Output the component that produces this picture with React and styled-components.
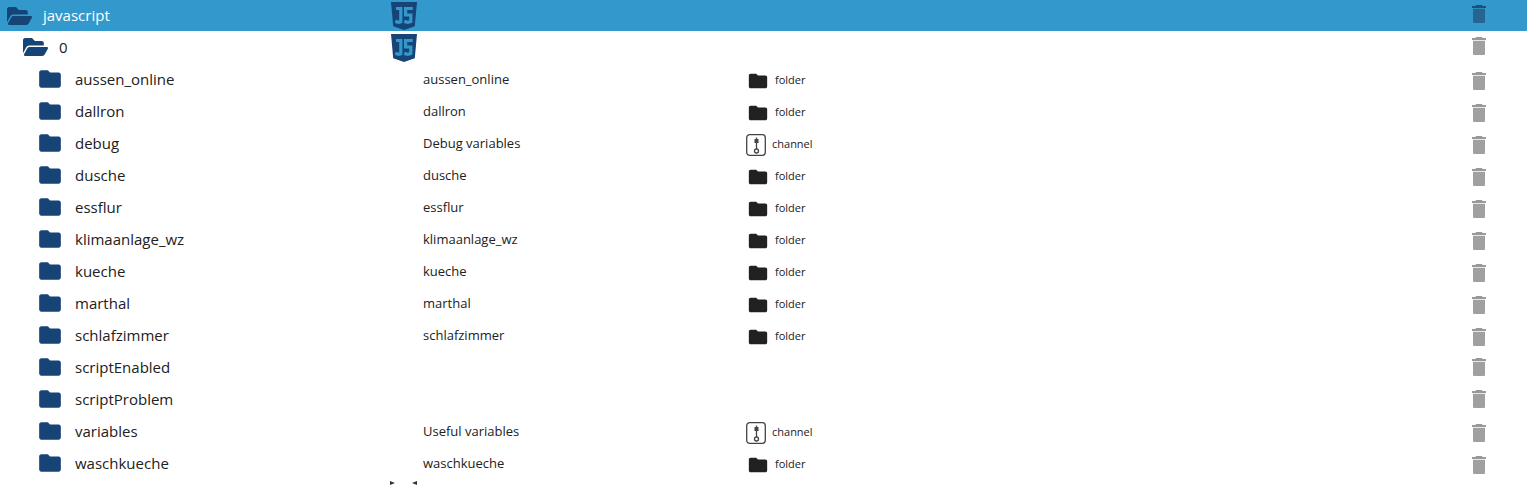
import React from 'react'
import styled, { createGlobalStyle } from 'styled-components'

const GlobalStyle = createGlobalStyle`
  html, body {
    margin: 0;
    padding: 0;
    background: #fff;
    overflow: hidden;
  }
  body {
    font-family: "Open Sans", "Liberation Sans", sans-serif;
    color: #212121;
  }
`

const rows = [
  { name: 'aussen_online', title: 'aussen_online', type: 'folder' },
  { name: 'dallron', title: 'dallron', type: 'folder' },
  { name: 'debug', title: 'Debug variables', type: 'channel' },
  { name: 'dusche', title: 'dusche', type: 'folder' },
  { name: 'essflur', title: 'essflur', type: 'folder' },
  { name: 'klimaanlage_wz', title: 'klimaanlage_wz', type: 'folder' },
  { name: 'kueche', title: 'kueche', type: 'folder' },
  { name: 'marthal', title: 'marthal', type: 'folder' },
  { name: 'schlafzimmer', title: 'schlafzimmer', type: 'folder' },
  { name: 'scriptEnabled' },
  { name: 'scriptProblem' },
  { name: 'variables', title: 'Useful variables', type: 'channel' },
  { name: 'waschkueche', title: 'waschkueche', type: 'folder' },
]

function FolderIcon({ size = 26, color = '#164477' }) {
  return (
    <svg width={size} height={size} viewBox="0 0 24 24" fill={color}>
      <path d="M10 4H4c-1.100 0-2 .9-2 2v12c0 1.100.9 2 2 2h16c1.100 0 2-.9 2-2V8c0-1.100-.9-2-2-2h-8l-2-2z" />
    </svg>
  )
}

function FolderOpenIcon() {
  return (
    <svg width="25" height="24" viewBox="0 0 576 512" fill="#164477" preserveAspectRatio="none">
      <path d="M572.700 292.100l-72.400 124.100A64 64 0 0 1 445 448H45c-18.500 0-30-20-20.700-36.100l72.400-124.100A64 64 0 0 1 152 256h400c18.500 0 30 20 20.700 36.100zM152 224h328v-48c0-26.500-21.500-48-48-48H272l-64-64H48C21.500 64 0 85.500 0 112v278l69.100-118.400C86.200 242.300 117.900 224 152 224z" />
    </svg>
  )
}

function JsIcon() {
  return (
    <svg width="26" height="28" viewBox="0 0 26 28">
      <path d="M0 0h26l-2.200 24.200L13 28 2.200 24.200z" fill="#164477" />
      <g fill="none" stroke="#3399cc" strokeWidth="3.200">
        <path d="M5 6.500H9.800V19.700L7.500 20.400L4.300 19.400" />
        <path d="M21.800 6.500H14.600V13H19.800V19.500L16.800 20.400L13.200 19.400" />
      </g>
    </svg>
  )
}

function TrashIcon({ lid = '#999', body = '#a0a0a0' }) {
  return (
    <svg width="14" height="18" viewBox="0 0 14 18">
      <path d="M1 3.700h12v13c0 .7-.6 1.300-1.300 1.300H2.300c-.7 0-1.300-.6-1.300-1.300z" fill={body} />
      <path d="M4 0h6l.5 1H14v2H0V1h3.500z" fill={lid} />
    </svg>
  )
}

function ChannelIcon() {
  return (
    <svg width="20" height="22" viewBox="0 0 20 22" fill="none" stroke="#444" strokeWidth="1.300">
      <rect x="0.700" y="0.700" width="18.600" height="20.600" rx="3" />
      <path d="M10.500 3.500v11.500" />
      <rect x="8.500" y="5" width="4" height="4" fill="#444" stroke="none" />
      <circle cx="10.500" cy="17" r="2" />
    </svg>
  )
}

function ClippedMarks() {
  return (
    <svg width="28" height="6" viewBox="0 0 28 6" fill="#333">
      <path d="M0 2l5 2L0 6z" />
      <path d="M27 2l-5 2L27 6z" />
    </svg>
  )
}

function App() {
  return (
    <>
      <GlobalStyle />
      <Tree>
        <Row $selected>
          <NameCell $indent={7}>
            <FolderOpenIcon />
            <RootName>javascript</RootName>
          </NameCell>
          <IconCell><JsIcon /></IconCell>
          <TitleCell />
          <TypeCell />
          <Actions $shift={-3}><TrashIcon lid="#1c5177" body="#27648f" /></Actions>
        </Row>
        <Row>
          <NameCell $indent={23}>
            <FolderOpenIcon />
            <Name $gap={11}>0</Name>
          </NameCell>
          <IconCell><JsIcon /></IconCell>
          <TitleCell />
          <TypeCell />
          <Actions $shift={-2}><TrashIcon /></Actions>
        </Row>
        {rows.map((row) => (
          <Row key={row.name}>
            <NameCell $indent={37}>
              <FolderIcon />
              <Name $gap={12}>{row.name}</Name>
            </NameCell>
            <IconCell />
            <TitleCell>{row.title}</TitleCell>
            <TypeCell>
              {row.type === 'folder' && (
                <>
                  <TypeIcon $left={16}><FolderIcon size={22} color="#212121" /></TypeIcon>
                  <TypeLabel $gap={6}>folder</TypeLabel>
                </>
              )}
              {row.type === 'channel' && (
                <>
                  <TypeIcon $left={15}><ChannelIcon /></TypeIcon>
                  <TypeLabel $gap={6}>channel</TypeLabel>
                </>
              )}
            </TypeCell>
            <Actions $shift={row.title ? 4 : -1}><TrashIcon /></Actions>
          </Row>
        ))}
        <Row>
          <NameCell />
          <MarkCell><ClippedMarks /></MarkCell>
        </Row>
      </Tree>
    </>
  )
}

export default App

const Tree = styled.div`
  width: 1527px;
  height: 485px;
  overflow: hidden;
`

const Row = styled.div`
  display: grid;
  grid-template-columns: 390px 33px 308px 1fr 55px;
  align-items: center;
  height: ${(p) => (p.$selected ? '31px' : '32px')};
  background: ${(p) => (p.$selected ? '#3399cc' : 'transparent')};
  color: ${(p) => (p.$selected ? '#fff' : '#212121')};
`

const NameCell = styled.div`
  display: flex;
  align-items: center;
  padding-left: ${(p) => p.$indent}px;
`

const Name = styled.span`
  margin-left: ${(p) => p.$gap}px;
  font-size: 15px;
`

const RootName = styled.span`
  margin-left: 11px;
  margin-top: -2px;
  font-size: 15px;
`

const IconCell = styled.div`
  display: flex;
  align-items: center;
  margin-left: 1px;
  margin-top: 1px;
`

const MarkCell = styled.div`
  display: flex;
  align-self: start;
`

const TitleCell = styled.div`
  font-size: 13px;
`

const TypeCell = styled.div`
  display: flex;
  align-items: center;
`

const TypeIcon = styled.span`
  display: flex;
  margin-left: ${(p) => p.$left}px;
  margin-top: 4px;
`

const TypeLabel = styled.span`
  margin-left: ${(p) => p.$gap}px;
  font-size: 11px;
`

const Actions = styled.div`
  display: flex;
  align-items: center;
  margin-top: ${(p) => p.$shift}px;
`
